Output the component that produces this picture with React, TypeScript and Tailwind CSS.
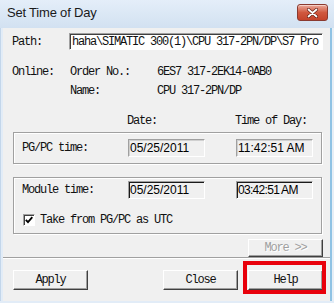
import React from 'react';

const mono = "font-['Liberation_Mono',monospace] text-[12px] tracking-[-1.2px] leading-[16px] text-[#111]";
const sans = "font-['Liberation_Sans',Arial,sans-serif] text-[12px] leading-[14px] text-black";

// classic 3D push button
const Btn = ({ label, disabled }: { label: string; disabled?: boolean }) => (
    <div className="w-[75px] h-full border border-t-white border-l-white border-r-[#404040] border-b-[#404040] bg-[#f0f0f0] shadow-[inset_-1px_-1px_0_#a0a0a0] flex items-center justify-center">
        <span className={disabled ? `${mono} !text-[#a0a0a0] [text-shadow:1px_1px_0_#fff]` : mono}>{label}</span>
    </div>
);

// sunken read-only field
const Field = ({ value, dark, tight }: { value: string; dark?: boolean; tight?: boolean }) => (
    <div
        className={`w-[77px] h-[18px] bg-[#f0f0f0] flex items-center pl-[1px] border border-b-white border-r-white ${
            dark
                ? 'border-t-[#a0a0a0] border-l-[#a0a0a0] shadow-[inset_1px_1px_0_#1a1a1a]'
                : 'border-t-[#a0a0a0] border-l-[#a0a0a0] shadow-[inset_1px_1px_0_#d0d0d0]'
        }`}
    >
        <span className={tight ? `${sans} tracking-[-0.7px]` : sans}>{value}</span>
    </div>
);

export default function App() {
    return (
        <div className="w-[334px] h-[303px] bg-[#d5e3f2] flex flex-col relative overflow-hidden">
            {/* title bar */}
            <div className="h-[28px] flex items-start justify-between bg-gradient-to-b from-[#e4eef9] to-[#d2e1f1] pl-[7px] pr-[6px]">
                <span className="mt-[5px] font-['Liberation_Sans',Arial,sans-serif] text-[13px] leading-[16px] tracking-[-0.2px] text-[#1a1a1a]">
                    Set Time of Day
                </span>
                <div className="mt-[4px] w-[31px] h-[17px] rounded-[3px] border border-[#8a3a30] bg-gradient-to-b from-[#e9a99c] via-[#d0583f] to-[#c4432b] flex items-center justify-center shadow-[inset_0_1px_0_#f5cfc6]">
                    <svg width="11" height="10" viewBox="0 0 11 10">
                        <path d="M1.5 1.5 L9.5 8.5 M9.5 1.5 L1.5 8.5" stroke="#5a1a10" strokeWidth="3" strokeLinecap="round" />
                        <path d="M1.5 1.5 L9.5 8.5 M9.5 1.5 L1.5 8.5" stroke="#fff" strokeWidth="1.8" strokeLinecap="round" />
                    </svg>
                </div>
            </div>

            {/* frame + client */}
            <div className="flex flex-1">
                <div className="w-[3px] bg-[#e2ecf7] border-l border-[#c3d6ea]" />
                <div className="w-[327px] h-[273px] bg-[#f0f0f0] flex flex-col">
                    {/* Path */}
                    <div className="mt-[5px] flex items-center pl-[9px]">
                        <span className={`${mono} w-[57px]`}>Path:</span>
                        <div className="w-[254px] h-[17px] bg-white border border-t-[#a0a0a0] border-l-[#a0a0a0] border-b-white border-r-white shadow-[inset_1px_1px_0_#404040] flex items-center pl-[2px] overflow-hidden whitespace-nowrap">
                            <span className={mono}>haha\SIMATIC 300(1)\CPU 317-2PN/DP\S7 Pro</span>
                        </div>
                    </div>

                    {/* Online */}
                    <div className="mt-[14px] flex pl-[9px] whitespace-nowrap">
                        <span className={`${mono} w-[58px]`}>Online:</span>
                        <span className={`${mono} w-[87px]`}>Order No.:</span>
                        <span className={mono}>6ES7 317-2EK14-0AB0</span>
                    </div>
                    <div className="mt-[3px] flex pl-[67px] whitespace-nowrap">
                        <span className={`${mono} w-[87px]`}>Name:</span>
                        <span className={mono}>CPU 317-2PN/DP</span>
                    </div>

                    {/* headers */}
                    <div className="mt-[14px] flex pl-[124px] whitespace-nowrap">
                        <span className={`${mono} w-[108px]`}>Date:</span>
                        <span className={mono}>Time of Day:</span>
                    </div>

                    {/* PG/PC group */}
                    <div className="mt-[3px] ml-[10px] w-[309px] h-[32px] border border-[#a0a0a0] shadow-[inset_1px_1px_0_#fff,1px_1px_0_#fff] flex items-center pl-[8px]">
                        <span className={`${mono} w-[106px]`}>PG/PC time:</span>
                        <Field value="05/25/2011" />
                        <div className="ml-[31px]">
                            <Field value="11:42:51 AM" />
                        </div>
                    </div>

                    {/* Module group */}
                    <div className="mt-[13px] ml-[10px] w-[309px] h-[57px] border border-[#a0a0a0] shadow-[inset_1px_1px_0_#fff,1px_1px_0_#fff] flex flex-col pl-[8px] pt-[3px]">
                        <div className="flex items-center">
                            <span className={`${mono} w-[106px]`}>Module time:</span>
                            <Field value="05/25/2011" dark />
                            <div className="ml-[31px]">
                                <Field value="03:42:51 AM" dark tight />
                            </div>
                        </div>
                        <div className="mt-[13px] flex items-center">
                            <div className="ml-[1px] w-[12px] h-[12px] bg-white border border-t-[#a0a0a0] border-l-[#a0a0a0] border-b-white border-r-white shadow-[inset_1px_1px_0_#404040] flex items-center justify-center">
                                <svg width="8" height="8" viewBox="0 0 8 8">
                                    <path d="M0.8 3.8 L3 6.2 L7.3 1.2" stroke="#000" strokeWidth="1.8" fill="none" />
                                </svg>
                            </div>
                            <span className={`${mono} ml-[5px]`}>Take from PG/PC as UTC</span>
                        </div>
                    </div>

                    {/* More */}
                    <div className="mt-[5px] ml-[245px] h-[18px]">
                        <Btn label="More >>" disabled />
                    </div>
                    <div className="h-[1px] bg-[#a0a0a0]" />
                    <div className="h-[1px] bg-white" />

                    {/* bottom buttons */}
                    <div className="mt-[11px] h-[20px] flex pl-[10px]">
                        <Btn label="Apply" />
                        <div className="ml-[75px]">
                            <Btn label="Close" />
                        </div>
                        <div className="ml-[10px]">
                            <Btn label="Help" />
                        </div>
                    </div>
                </div>
                <div className="w-[2px] bg-[#8fc3e4]" />
                <div className="w-[2px] bg-[#e8eff6]" />
            </div>
            <div className="h-[2px] bg-[#e2ecf7]" />

            {/* red highlight annotation */}
            <div className="absolute left-[243px] top-[261px] w-[83px] h-[33px] border-[4px] border-[#e8000b]" />
        </div>
    );
}
